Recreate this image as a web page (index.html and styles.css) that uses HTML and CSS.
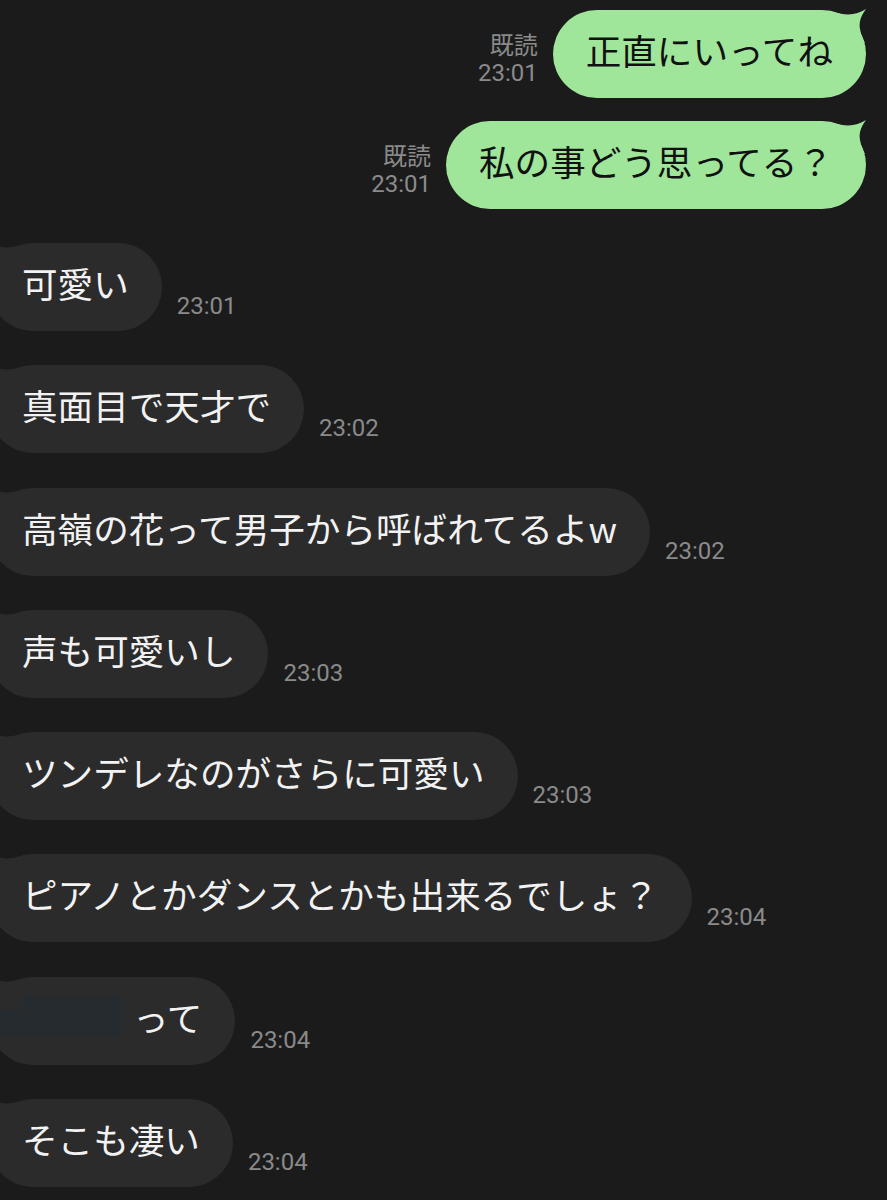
FILE: index.html
```html
<!DOCTYPE html>
<html lang="ja">
<head>
    <meta charset="UTF-8">
    <meta name="viewport" content="width=device-width, initial-scale=1.0">
    <title>Chat</title>
    <link rel="stylesheet" href="styles.css">
</head>
<body>
    <div class="chat">
        <!-- Sent messages -->
        <div class="row row-out">
            <div class="meta">
                <span>既読</span>
                <span>23:01</span>
            </div>
            <div class="bubble bubble-out">
                正直にいってね
                <svg class="tail tail-out" viewBox="0 0 34 34"><path d="M0,3 C14,7 24,6 33,0 C27,8 26,14 27,20 C28,26 30,30 32,34 L0,34 Z"/></svg>
            </div>
        </div>
        <div class="row row-out">
            <div class="meta">
                <span>既読</span>
                <span>23:01</span>
            </div>
            <div class="bubble bubble-out">
                私の事どう思ってる？
                <svg class="tail tail-out" viewBox="0 0 34 34"><path d="M0,3 C14,7 24,6 33,0 C27,8 26,14 27,20 C28,26 30,30 32,34 L0,34 Z"/></svg>
            </div>
        </div>

        <!-- Received messages -->
        <div class="row row-in">
            <div class="bubble bubble-in">可愛い<svg class="tail tail-in" viewBox="0 0 34 34"><path d="M0,3 C14,7 24,6 33,0 C27,8 26,14 27,20 C28,26 30,30 32,34 L0,34 Z"/></svg></div>
            <div class="time">23:01</div>
        </div>
        <div class="row row-in">
            <div class="bubble bubble-in">真面目で天才で<svg class="tail tail-in" viewBox="0 0 34 34"><path d="M0,3 C14,7 24,6 33,0 C27,8 26,14 27,20 C28,26 30,30 32,34 L0,34 Z"/></svg></div>
            <div class="time">23:02</div>
        </div>
        <div class="row row-in">
            <div class="bubble bubble-in">高嶺の花って男子から呼ばれてるよw<svg class="tail tail-in" viewBox="0 0 34 34"><path d="M0,3 C14,7 24,6 33,0 C27,8 26,14 27,20 C28,26 30,30 32,34 L0,34 Z"/></svg></div>
            <div class="time">23:02</div>
        </div>
        <div class="row row-in">
            <div class="bubble bubble-in">声も可愛いし<svg class="tail tail-in" viewBox="0 0 34 34"><path d="M0,3 C14,7 24,6 33,0 C27,8 26,14 27,20 C28,26 30,30 32,34 L0,34 Z"/></svg></div>
            <div class="time">23:03</div>
        </div>
        <div class="row row-in">
            <div class="bubble bubble-in">ツンデレなのがさらに可愛い<svg class="tail tail-in" viewBox="0 0 34 34"><path d="M0,3 C14,7 24,6 33,0 C27,8 26,14 27,20 C28,26 30,30 32,34 L0,34 Z"/></svg></div>
            <div class="time">23:03</div>
        </div>
        <div class="row row-in">
            <div class="bubble bubble-in">ピアノとかダンスとかも出来るでしょ？<svg class="tail tail-in" viewBox="0 0 34 34"><path d="M0,3 C14,7 24,6 33,0 C27,8 26,14 27,20 C28,26 30,30 32,34 L0,34 Z"/></svg></div>
            <div class="time">23:04</div>
        </div>
        <div class="row row-in">
            <div class="bubble bubble-in"><span class="redacted"></span>って<svg class="tail tail-in" viewBox="0 0 34 34"><path d="M0,3 C14,7 24,6 33,0 C27,8 26,14 27,20 C28,26 30,30 32,34 L0,34 Z"/></svg></div>
            <div class="time">23:04</div>
        </div>
        <div class="row row-in">
            <div class="bubble bubble-in">そこも凄い<svg class="tail tail-in" viewBox="0 0 34 34"><path d="M0,3 C14,7 24,6 33,0 C27,8 26,14 27,20 C28,26 30,30 32,34 L0,34 Z"/></svg></div>
            <div class="time">23:04</div>
        </div>
    </div>
</body>
</html>
```

FILE: styles.css
```css
html, body {
    margin: 0;
    background-color: #1b1b1b;
    overflow: hidden;
}
.chat {
    padding-top: 10px;
    font-family: "Noto Sans CJK JP", "Noto Sans", sans-serif;
}
.row {
    display: flex;
    align-items: flex-end;
}
.row-out {
    justify-content: flex-end;
    margin-right: 21px;
    margin-bottom: 23px;
}
.row-out + .row-in {
    margin-top: 34px; /* collapses with the 23px above */
}
.row-in {
    margin-left: -11px;
    margin-bottom: 34.3px;
}
.bubble {
    position: relative;
    padding: 17px 33px 25px;
    line-height: 46px;
    font-size: 35.6px;
    border-radius: 44px;
    white-space: nowrap;
}
.bubble-out {
    background-color: #9fe69b;
    color: #111;
}
.bubble-in {
    background-color: #2b2b2b;
    color: #f2f2f2;
}
.tail {
    position: absolute;
    top: -1px;
    width: 34px;
    height: 34px;
}
.tail-out {
    right: -1px;
    fill: #9fe69b;
}
.tail-in {
    left: -1px;
    fill: #2b2b2b;
    transform: scaleX(-1);
}
.meta, .time {
    font-family: Roboto, "Noto Sans CJK JP", sans-serif;
    font-size: 24px;
    line-height: 27px;
    color: #8a8a8a;
    margin-bottom: 11px;
}
.meta {
    display: flex;
    flex-direction: column;
    align-items: flex-end;
    margin-right: 15px;
}
.time {
    margin-left: 15px;
}
.redacted {
    display: inline-block;
    vertical-align: middle;
    width: 133px;
    height: 40px;
    margin: -12px 11px 0 -33px;
    background-color: #262b2f;
    border-radius: 0 8px 8px 0;
}
```
